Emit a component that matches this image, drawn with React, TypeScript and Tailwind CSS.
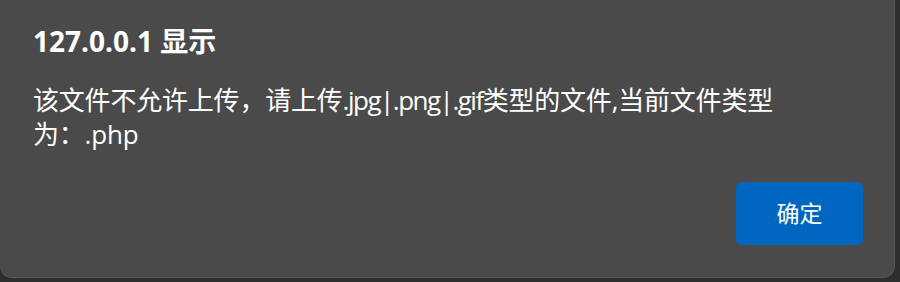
export default function App() {
  return (
    <div
      className="w-[900px] h-[282px] bg-[#2e2e2e] overflow-hidden"
      style={{ fontFamily: '"Open Sans", "Noto Sans CJK SC", sans-serif' }}
    >
      <div className="w-[895px] h-[278px] bg-[#4a4a4a] rounded-b-[12px] border-r border-b border-[#565656] flex flex-col pl-[33px] pr-[31px] pt-[26px]">
        {/* Title */}
        <h1 className="text-[28px] leading-[30px] font-bold text-white">127.0.0.1 显示</h1>

        {/* Message */}
        <p className="mt-[27px] text-[26px] leading-[34px] text-white whitespace-nowrap tracking-[-0.2px]">
          该文件不允许上传，请上传<span className="tracking-[-1.5px]">.jpg|.png|.gif</span>类型的文件,当前文件类型
          <br />
          为：.php
        </p>

        {/* Actions */}
        <div className="flex justify-end mt-[31px]">
          <button className="w-[127px] h-[63px] rounded-[6px] bg-[#0067c0] text-white text-[23px]">
            确定
          </button>
        </div>
      </div>
    </div>
  )
}
